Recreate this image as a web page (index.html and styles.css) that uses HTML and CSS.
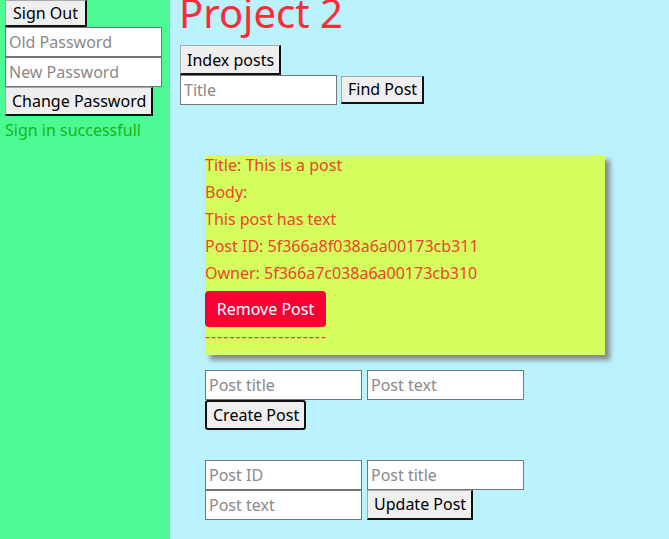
FILE: index.html
```html
<!DOCTYPE html>
<html>
<head>
<meta charset="utf-8">
<link rel="stylesheet" href="styles.css">
</head>
<body>
<div class="page">
  <aside class="sidebar">
    <button class="btn signout">Sign Out</button>
    <input class="field" placeholder="Old Password">
    <input class="field" placeholder="New Password">
    <button class="btn">Change Password</button>
    <div class="status">Sign in successfull</div>
  </aside>
  <main class="main">
    <h1 class="title">Project 2</h1>
    <div class="row"><button class="btn index">Index posts</button></div>
    <div class="row find">
      <input class="field" placeholder="Title">
      <button class="btn">Find Post</button>
    </div>
    <div class="card">
      <div class="line">Title: This is a post</div>
      <div class="line">Body:</div>
      <div class="line">This post has text</div>
      <div class="line">Post ID: 5f366a8f038a6a00173cb311</div>
      <div class="line">Owner: 5f366a7c038a6a00173cb310</div>
      <button class="remove">Remove Post</button>
      <div class="dashes">--------------------</div>
    </div>
    <form class="form create">
      <div class="row gap">
        <input class="field" placeholder="Post title">
        <input class="field" placeholder="Post text">
      </div>
      <div class="row"><button type="button" class="btn focused">Create Post</button></div>
    </form>
    <form class="form update">
      <div class="row gap">
        <input class="field" placeholder="Post ID">
        <input class="field" placeholder="Post title">
      </div>
      <div class="row gap">
        <input class="field" placeholder="Post text">
        <button type="button" class="btn">Update Post</button>
      </div>
    </form>
  </main>
</div>
</body>
</html>
```

FILE: styles.css
```css
html, body {
  margin: 0;
  padding: 0;
  height: 100%;
  overflow: hidden;
}
body {
  font-family: "Noto Sans", sans-serif;
  font-size: 16px;
}
.page {
  display: flex;
  height: 539px;
}
.sidebar {
  width: 165px;
  padding-left: 5px;
  background: #4bfa93;
  display: flex;
  flex-direction: column;
  align-items: flex-start;
}
.main {
  flex: 1;
  background: #baf2fe;
  padding-left: 10px;
  display: flex;
  flex-direction: column;
  align-items: flex-start;
}
.btn {
  font-family: inherit;
  font-size: 16px;
  line-height: 20px;
  color: #000;
  background: #efefef;
  border-style: solid;
  border-width: 1px 2px 2px 1px;
  border-color: #a8a8a8 #111 #111 #a8a8a8;
  padding: 2px 5px 3px 6px;
  height: 29px;
  margin: 0;
}
.signout {
  height: 27px;
  padding: 1px 7px 2px 7px;
}
.index {
  height: 30px;
  padding-top: 3px;
}
.field {
  font-family: inherit;
  font-size: 16px;
  width: 157px;
  height: 30px;
  box-sizing: border-box;
  border: 1px solid #767676;
  padding: 1px 3px;
  margin: 0;
  background: #fff;
}
.field::placeholder {
  color: #8a8a8a;
}
.status {
  color: #1cb41c;
  margin-top: 3px;
  line-height: 22px;
}
.title {
  color: #ff2a36;
  font-weight: normal;
  font-size: 40px;
  line-height: 40px;
  margin: -7px 0 12px -1px;
  font-family: "Noto Sans", sans-serif;
}
.row {
  display: flex;
  align-items: flex-start;
}
.find {
  gap: 4px;
}
.find .btn {
  margin-top: 1px;
  height: 28px;
}
.gap {
  gap: 5px;
}
.card {
  margin: 50px 0 0 25px;
  width: 400px;
  height: 200px;
  box-sizing: border-box;
  background: #d4fd5e;
  box-shadow: 5px 5px 5px #888;
  color: #f0442c;
  display: flex;
  flex-direction: column;
  align-items: flex-start;
  gap: 7px;
}
.line {
  line-height: 20px;
}
.remove {
  font-family: inherit;
  font-size: 16px;
  background: #f70034;
  color: #fff;
  border: none;
  border-radius: 4px;
  width: 121px;
  height: 36px;
  margin-top: 1px;
  padding: 0;
}
.dashes {
  line-height: 18px;
  margin-top: -7px;
  letter-spacing: 0.95px;
}
.form {
  margin: 15px 0 0 25px;
  display: flex;
  flex-direction: column;
  align-items: flex-start;
}
.focused {
  border: 2px solid #111;
  border-radius: 3px;
  height: 30px;
}
.update {
  margin-top: 30px;
}
.update .btn {
  height: 30px;
}
```
